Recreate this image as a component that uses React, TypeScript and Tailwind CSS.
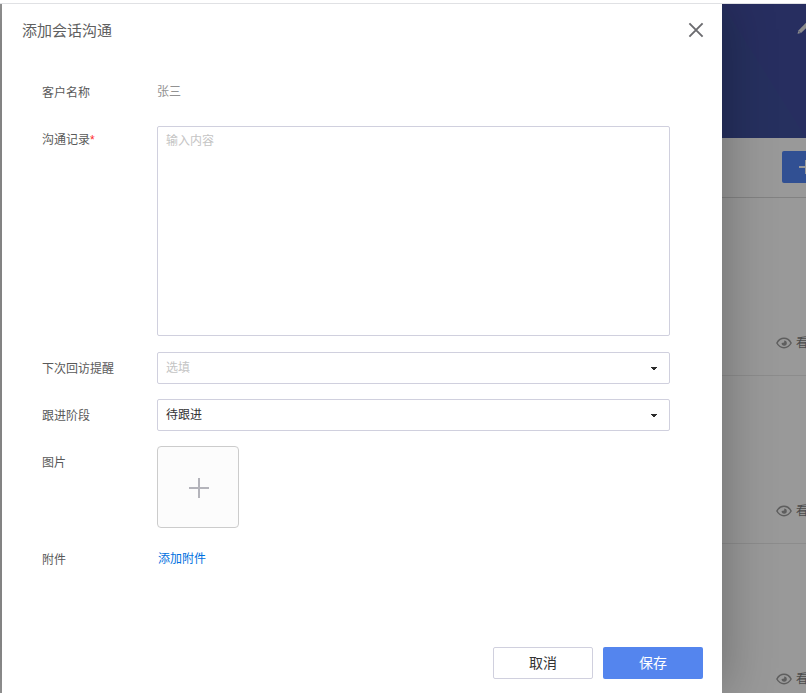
import React from 'react';
import clsx from 'clsx';

interface FieldProps {
    label: string;
    required?: boolean;
    className?: string;
    labelClassName?: string;
    children: React.ReactNode;
}

const Field: React.FC<FieldProps> = ({ label, required, className, labelClassName, children }) => (
    <div className={clsx('flex items-start', className)}>
        <label className={clsx('w-[115px] shrink-0 text-[#595959]', labelClassName)}>
            {label}
            {required && <span className="text-[#ff2a2a]">*</span>}
        </label>
        {children}
    </div>
);

const SelectBox: React.FC<{ text: string; placeholder?: boolean }> = ({ text, placeholder }) => (
    <div className="w-[513px] h-8 flex items-center justify-between pl-2 pr-3 border border-[#d0d0de] rounded-[2px]">
        <span className={clsx('-mt-px', placeholder ? 'text-[#c4c4c4]' : 'text-[#333333]')}>{text}</span>
        <svg width="6" height="3" viewBox="0 0 6 3" className="overflow-visible" fill="#2b2b2b" shapeRendering="crispEdges">
            <path d="M0 0H6V1H5V2H4V3H2V2H1V1H0Z" />
        </svg>
    </div>
);

const EyeIcon: React.FC = () => (
    <svg width="16" height="12" viewBox="0 0 16 12" fill="none" className="shrink-0">
        <path d="M.9 6C2.7 2.7 5.2 1.3 8 1.3S13.3 2.7 15.1 6C13.3 9.3 10.8 10.7 8 10.7S2.7 9.3.9 6Z" stroke="#5e5e5e" strokeWidth="1.5" />
        <path d="M8.2 3.5A2.6 2.6 0 1 1 5.6 6.1L8.2 5.6Z" fill="#5e5e5e" />
    </svg>
);

const RecordRow: React.FC = () => (
    <div className="h-[168px] shrink-0 flex items-end pl-[54px] pb-[23px] border-b border-[#8c8c8c]">
        <div className="flex items-center gap-1 h-[18px] whitespace-nowrap text-[#4b4b4b]">
            <EyeIcon />
            <span>看</span>
        </div>
    </div>
);

const Background: React.FC = () => (
    <div className="w-[84px] shrink-0 flex flex-col overflow-hidden bg-[#999999]">
        <div className="h-[134px] shrink-0 flex justify-end overflow-hidden bg-[#272f60] bg-[linear-gradient(58deg,#26305f_50%,#272e60_50%)]">
            <svg width="9" height="14" viewBox="0 0 9 14" className="mt-[18px] shrink-0">
                <path d="M.6 11.7L1.4 8.4 9 .8V6.3L4 11.1Z" fill="#8c8c8c" />
                <path d="M1.4 8.8L3.6 11" stroke="#40456b" strokeWidth=".8" />
            </svg>
        </div>
        <div className="h-[60px] shrink-0 flex items-start justify-end pt-[13px] border-b border-[#828282]">
            <div className="w-6 h-8 flex items-center justify-end rounded-l-[2px] bg-[#315093]">
                <svg width="7" height="14" viewBox="0 0 7 14" fill="none" stroke="#999999" strokeWidth="2">
                    <path d="M0 7H7M7 0V14" />
                </svg>
            </div>
        </div>
        <div className="h-[10px] shrink-0" />
        <div className="flex flex-col">
            <RecordRow />
            <RecordRow />
            <RecordRow />
        </div>
    </div>
);

export default function App() {
    return (
        <div className="w-[806px] h-[693px] flex flex-col overflow-hidden bg-white text-xs leading-[18px] font-['Liberation_Sans','Noto_Sans_CJK_SC',sans-serif]">
            <div className="h-1 shrink-0 border-b border-[#e0e1e4]" />
            <div className="flex flex-1 min-h-0 overflow-hidden">
                <div className="w-0.5 shrink-0 bg-[#999999]" />
                <section className="relative z-10 w-[720px] shrink-0 flex flex-col bg-white shadow-[0_0_50px_rgba(0,0,0,0.3)]">
                    <header className="h-[54px] shrink-0 flex items-center justify-between pl-5 pr-[18px]">
                        <h1 className="text-[15px] leading-5 text-[#606060]">添加会话沟通</h1>
                        <svg width="16" height="16" viewBox="0 0 16 16" fill="none" stroke="#6b6b6f" strokeWidth="1.9" className="mt-[-2px]">
                            <path d="M1.4 1.4L14.6 14.6M14.6 1.4L1.4 14.6" />
                        </svg>
                    </header>

                    <div className="flex-1 flex flex-col pl-10 pt-6">
                        <Field label="客户名称" className="h-11" labelClassName="pt-0.5">
                            <span className="pt-px text-[#929292]">张三</span>
                        </Field>
                        <Field label="沟通记录" required className="h-[226px]" labelClassName="pt-[5px]">
                            <textarea
                                placeholder="输入内容"
                                className="block w-[513px] h-[210px] px-2 pt-[5px] resize-none outline-none border border-[#d0d0de] rounded-[2px] placeholder:text-[#c4c4c4]"
                            />
                        </Field>
                        <Field label="下次回访提醒" className="h-[47px]" labelClassName="pt-2">
                            <SelectBox text="选填" placeholder />
                        </Field>
                        <Field label="跟进阶段" className="h-[47px]" labelClassName="pt-2">
                            <SelectBox text="待跟进" />
                        </Field>
                        <Field label="图片" className="h-[104px]" labelClassName="pt-2">
                            <button className="w-[82px] h-[82px] flex items-center justify-center pl-0.5 pt-0.5 border border-[#cccccc] rounded-[4px] bg-[#fcfcfc]">
                                <svg width="20" height="20" viewBox="0 0 20 20" fill="none" stroke="#b4b4bb" strokeWidth="2">
                                    <path d="M0 10H20M10 0V20" />
                                </svg>
                            </button>
                        </Field>
                        <Field label="附件" labelClassName="pt-px">
                            <a className="pl-px text-[#0070e0]">添加附件</a>
                        </Field>
                    </div>

                    <footer className="shrink-0 flex justify-end gap-2.5 pr-[19px] pb-[14px] text-sm leading-5">
                        <button className="w-[100px] h-8 border border-[#d0d0de] rounded-[2px] text-[#333333]">取消</button>
                        <button className="w-[100px] h-8 rounded-[2px] bg-[#5485ee] text-white">保存</button>
                    </footer>
                </section>
                <Background />
            </div>
        </div>
    );
}
